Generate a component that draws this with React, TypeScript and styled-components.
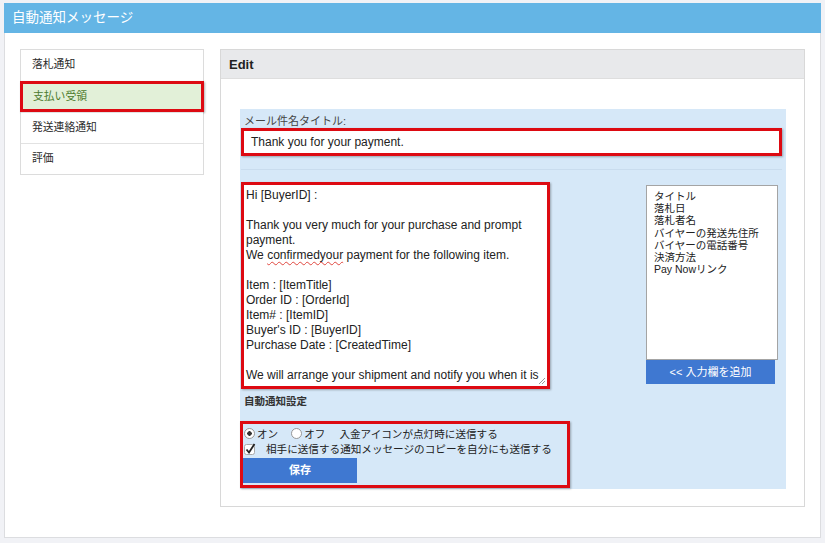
import styled, { createGlobalStyle } from "styled-components";

const GlobalStyle = createGlobalStyle`
  * {
    box-sizing: border-box;
  }
  body {
    margin: 0;
    background: #f1f2f6;
    font-family: "Liberation Sans", "Noto Sans CJK JP", sans-serif;
    color: #333;
  }
`;

const menuItems = ["落札通知", "支払い受領", "発送連絡通知", "評価"];
const tags = [
  "タイトル",
  "落札日",
  "落札者名",
  "バイヤーの発送先住所",
  "バイヤーの電話番号",
  "決済方法",
  "Pay Nowリンク",
];

const App: React.FC = () => {
  return (
    <>
      <GlobalStyle />
      <Page>
        <Panel>
          <PanelHeader>自動通知メッセージ</PanelHeader>
          <PanelBody>
            {/* 左メニュー */}
            <Menu>
              {menuItems.map((item, i) => (
                <MenuItem key={item} $active={i === 1}>
                  {item}
                </MenuItem>
              ))}
            </Menu>

            {/* 編集 */}
            <EditPanel>
              <EditHeader>Edit</EditHeader>
              <EditBody>
                <Form>
                  <Label>メール件名タイトル:</Label>
                  <SubjectInput>Thank you for your payment.</SubjectInput>
                  <Divider />
                  <BodyRow>
                    <MessageBox>
                      {"Hi [BuyerID] :\n\nThank you very much for your purchase and prompt\npayment.\nWe "}
                      <Misspelled>confirmedyour</Misspelled>
                      {" payment for the following item.\n\nItem : [ItemTitle]\nOrder ID : [OrderId]\nItem# : [ItemID]\nBuyer's ID : [BuyerID]\nPurchase Date : [CreatedTime]\n\nWe will arrange your shipment and notify you when it is"}
                      <Grip width="8" height="8" viewBox="0 0 8 8">
                        <path d="M7 1 L1 7 M7 4 L4 7" stroke="#999" strokeWidth="1" />
                      </Grip>
                    </MessageBox>
                    <TagColumn>
                      <TagList>
                        {tags.map((t) => (
                          <div key={t}>{t}</div>
                        ))}
                      </TagList>
                      <AddButton>&lt;&lt; 入力欄を追加</AddButton>
                    </TagColumn>
                  </BodyRow>
                  <SectionTitle>自動通知設定</SectionTitle>
                  <SettingBox>
                    <OptionRow>
                      <Radio $checked />
                      <span>オン</span>
                      <Radio $gap />
                      <span>オフ</span>
                      <OptionNote>入金アイコンが点灯時に送信する</OptionNote>
                    </OptionRow>
                    <OptionRow>
                      <Check viewBox="0 0 12 12" width="12" height="12">
                        <rect x="0.5" y="1.5" width="10" height="10" rx="2" fill="#fff" stroke="#aaa" />
                        <path d="M2.5 6.5 L5 9.5 L10.5 1" fill="none" stroke="#222" strokeWidth="1.8" />
                      </Check>
                      <CheckLabel>相手に送信する通知メッセージのコピーを自分にも送信する</CheckLabel>
                    </OptionRow>
                    <SaveButton>保存</SaveButton>
                  </SettingBox>
                </Form>
              </EditBody>
            </EditPanel>
          </PanelBody>
        </Panel>
      </Page>
    </>
  );
};

const Page = styled.div`
  width: 825px;
  height: 543px;
  padding: 3px 4px 5px 4px;
`;

const Panel = styled.div`
  width: 817px;
  height: 535px;
  background: #fff;
  border: 1px solid #dcdde0;
  display: flex;
  flex-direction: column;
`;

const PanelHeader = styled.div`
  height: 30px;
  background: #64b5e5;
  color: #fff;
  font-size: 13.5px;
  line-height: 30px;
  padding-left: 8px;
  margin: -1px -1px 0 -1px;
`;

const PanelBody = styled.div`
  display: flex;
  gap: 16px;
  padding: 16px 15px 0 15px;
  align-items: flex-start;
`;

// 左メニュー
const Menu = styled.div`
  width: 184px;
  border: 1px solid #dcdcdc;
  display: flex;
  flex-direction: column;
`;

const MenuItem = styled.div<{ $active?: boolean }>`
  height: 31px;
  font-size: 10.8px;
  color: ${(p) => (p.$active ? "#4b7a2c" : "#2a2a2a")};
  background: ${(p) => (p.$active ? "#e2f0d8" : "#fff")};
  border: ${(p) => (p.$active ? "3px solid #dd0a12" : "none")};
  border-top: ${(p) => (p.$active ? "3px solid #dd0a12" : "1px solid #e2e2e2")};
  margin: ${(p) => (p.$active ? "0 -1px 0 -1px" : "0")};
  padding-left: ${(p) => (p.$active ? "10px" : "11px")};
  line-height: ${(p) => (p.$active ? "25px" : "29px")};
  box-shadow: ${(p) => (p.$active ? "1px 1px 2px rgba(0,0,0,0.3)" : "none")};
  &:first-child {
    border-top: none;
  }
`;

// 編集
const EditPanel = styled.div`
  width: 585px;
  height: 458px;
  border: 1px solid #d8d8d8;
  display: flex;
  flex-direction: column;
`;

const EditHeader = styled.div`
  height: 29px;
  background: #e8e9eb;
  border-bottom: 1px solid #dedede;
  font-size: 13px;
  font-weight: bold;
  color: #222;
  line-height: 29px;
  padding-left: 8px;
`;

const EditBody = styled.div`
  padding: 30px 18px 0 19px;
`;

const Form = styled.div`
  background: #d6e8f8;
  height: 380px;
  display: flex;
  flex-direction: column;
  padding: 3px 4px 0 1px;
`;

const Label = styled.div`
  font-size: 11px;
  color: #444;
  padding-left: 3px;
  height: 16px;
`;

const SubjectInput = styled.div`
  height: 28px;
  background: #fff;
  border: 3px solid #dd0a12;
  box-shadow: 1px 1px 2px rgba(0, 0, 0, 0.3);
  font-size: 12px;
  line-height: 22px;
  padding-left: 7px;
  color: #222;
`;

const Divider = styled.div`
  margin: 13px 0 0 0;
  border-top: 1px solid #c9dcee;
  height: 13px;
`;

const BodyRow = styled.div`
  display: flex;
  align-items: flex-start;
`;

const MessageBox = styled.div`
  position: relative;
  width: 309px;
  height: 207px;
  background: #fff;
  border: 3px solid #dd0a12;
  box-shadow: 1px 1px 2px rgba(0, 0, 0, 0.3);
  padding: 3px 2px 0 2px;
  font-size: 12px;
  line-height: 15px;
  color: #222;
  white-space: pre;
  overflow: hidden;
`;

const Misspelled = styled.span`
  text-decoration: underline wavy #e0473f;
  text-decoration-thickness: 1px;
  text-underline-offset: 2px;
`;

const Grip = styled.svg`
  position: absolute;
  right: 1px;
  bottom: 1px;
`;

const TagColumn = styled.div`
  margin-left: 96px;
  margin-top: 3px;
  display: flex;
  flex-direction: column;
`;

const TagList = styled.div`
  width: 132px;
  height: 175px;
  background: #fff;
  border: 1px solid #a4a4a4;
  padding: 4px 7px;
  font-size: 10.5px;
  line-height: 12.2px;
  color: #222;
  white-space: nowrap;
`;

const AddButton = styled.div`
  width: 129px;
  height: 24px;
  background: #3f78d1;
  color: #fff;
  font-size: 11px;
  text-align: center;
  line-height: 24px;
`;

const SectionTitle = styled.div`
  margin-top: 4px;
  padding-left: 3px;
  font-size: 10.5px;
  font-weight: bold;
  color: #333;
  height: 28px;
`;

const SettingBox = styled.div`
  width: 330px;
  height: 67px;
  border: 3px solid #dd0a12;
  box-shadow: 1px 1px 2px rgba(0, 0, 0, 0.3);
  margin-left: -1px;
  padding: 2px 0 0 0;
  display: flex;
  flex-direction: column;
`;

const OptionRow = styled.div`
  display: flex;
  align-items: center;
  height: 15px;
  font-size: 10.6px;
  color: #222;
  white-space: nowrap;
`;

const Radio = styled.span<{ $checked?: boolean; $gap?: boolean }>`
  flex: none;
  width: 11px;
  height: 11px;
  border-radius: 50%;
  border: 1px solid #999;
  background: radial-gradient(
    circle,
    ${(p) => (p.$checked ? "#333 0 2px, " : "")}#fff ${(p) => (p.$checked ? "2.5px" : "0")}
  );
  margin: 0 2px 0 ${(p) => (p.$gap ? "13px" : "1px")};
`;

const OptionNote = styled.span`
  margin-left: 14px;
`;

const Check = styled.svg`
  flex: none;
  margin-left: 1px;
`;

const CheckLabel = styled.span`
  margin-left: 10px;
`;

const SaveButton = styled.div`
  width: 114px;
  height: 25px;
  margin-top: 2px;
  background: #3f78d1;
  color: #fff;
  font-size: 11px;
  font-weight: bold;
  text-align: center;
  line-height: 25px;
`;

export default App;
